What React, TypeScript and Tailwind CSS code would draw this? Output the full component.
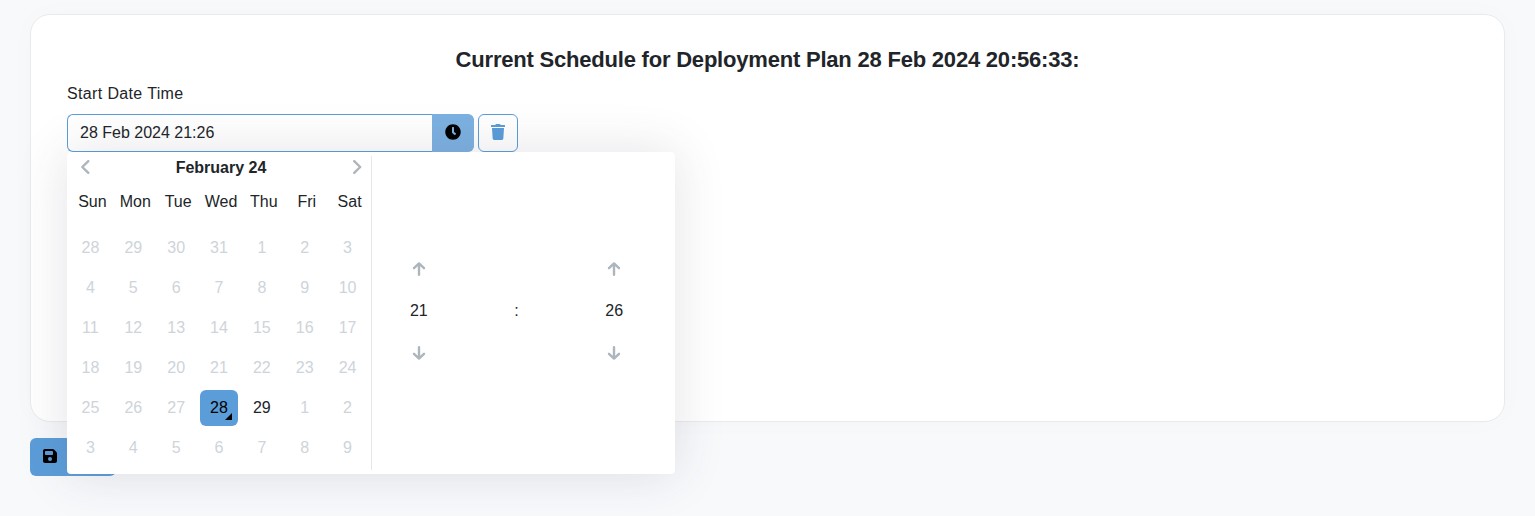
import { FaClock, FaTrash } from "react-icons/fa";
import { FaFloppyDisk } from "react-icons/fa6";

const weekdays = ["Sun", "Mon", "Tue", "Wed", "Thu", "Fri", "Sat"];

const days = [
  28, 29, 30, 31, 1, 2, 3,
  4, 5, 6, 7, 8, 9, 10,
  11, 12, 13, 14, 15, 16, 17,
  18, 19, 20, 21, 22, 23, 24,
  25, 26, 27, 28, 29, 1, 2,
  3, 4, 5, 6, 7, 8, 9,
];
const SELECTED = 31;
const ENABLED = 32;

function LineIcon({ d, className }: { d: string; className: string }) {
  return (
    <svg
      viewBox="0 0 16 16"
      className={className}
      fill="none"
      stroke="currentColor"
      strokeWidth="2.4"
      strokeLinecap="round"
      strokeLinejoin="round"
    >
      <path d={d} />
    </svg>
  );
}

function Day({ index, value }: { index: number; value: number }) {
  if (index === SELECTED) {
    return (
      <button className="relative h-9 w-full rounded-md bg-[#5b9dd9] text-black">
        {value}
        <span className="absolute right-1.5 bottom-1.5 border-b-[7px] border-l-[7px] border-b-black border-l-transparent" />
      </button>
    );
  }
  return (
    <button className={index === ENABLED ? "h-9 w-full text-[#212529]" : "h-9 w-full text-[#ced4da]"}>{value}</button>
  );
}

function Calendar() {
  return (
    <div className="w-[301px] border-r border-[#e5e7eb]">
      <div className="flex h-[23px] items-center justify-between px-1.5 text-[#adb5bd]">
        <LineIcon className="mb-px size-4" d="M11.3 2.2 L5.3 8 L11.3 13.8" />
        <span className="font-bold text-[#212529]">February 24</span>
        <LineIcon className="mb-px size-4" d="M5.2 2.2 L11.2 8 L5.2 13.8" />
      </div>
      <div className="grid h-[46px] grid-cols-7 items-center text-center">
        {weekdays.map((name) => (
          <span key={name}>{name}</span>
        ))}
      </div>
      <div className="mt-[3px] grid auto-rows-[40px] grid-cols-7">
        {days.map((value, index) => (
          <div key={index} className="flex items-center pr-1">
            <Day index={index} value={value} />
          </div>
        ))}
      </div>
    </div>
  );
}

function Stepper({ value }: { value: string }) {
  return (
    <div className="grid flex-1 grid-rows-[42px_42px_42px] place-items-center">
      <LineIcon className="size-4 text-[#adb5bd]" d="M8 13.8 V2.4 M3 7.2 L8 2.4 L13 7.2" />
      <span>{value}</span>
      <LineIcon className="size-4 text-[#adb5bd]" d="M8 2.2 V13.6 M3 8.8 L8 13.6 L13 8.8" />
    </div>
  );
}

function DateTimePicker() {
  return (
    <div className="absolute top-full left-0 z-10 flex h-[322px] w-[608px] rounded bg-white p-1 text-[#212529] shadow-[0_0_50px_rgba(72,60,85,0.15)]">
      <Calendar />
      <div className="-ml-0.5 flex w-[293px] items-center pb-1">
        <Stepper value="21" />
        <span className="flex-1 text-center">:</span>
        <Stepper value="26" />
      </div>
    </div>
  );
}

export default function App() {
  return (
    <main className="h-[516px] overflow-hidden bg-[#f7f9fb] px-[30px] pt-3.5 font-['Liberation_Sans',Arial,sans-serif] text-base leading-6 text-[#212529]">
      <section className="h-[408px] rounded-[20px] border border-[#e8eaed] bg-white px-9 pt-[30px] shadow-[0_0_30px_rgba(0,0,0,0.02)]">
        <h1 className="text-center text-[22px] leading-[30px] font-bold tracking-[-0.207px]">
          Current Schedule for Deployment Plan 28 Feb 2024 20:56:33:
        </h1>
        <div className="mt-[7px] leading-6 tracking-[0.36px]">Start Date Time</div>
        <div className="relative mt-2 flex h-[38px] w-[451px] gap-1">
          <div className="flex w-[407px]">
            <input
              className="w-[365px] rounded-l-md border border-r-0 border-[#5b9dd9] bg-white px-3 outline-none"
              defaultValue="28 Feb 2024 21:26"
            />
            <button className="flex flex-1 items-center justify-center rounded-r-md border border-l-0 border-[#7cb1e1] bg-[#7cb1e1] pb-0.5 text-black">
              <FaClock className="size-4" />
            </button>
          </div>
          <button className="flex w-10 items-center justify-center rounded-md border border-[#5b9dd9] pb-0.5 text-[#5b9dd9]">
            <FaTrash className="h-4 w-3.5" />
          </button>
          <DateTimePicker />
        </div>
      </section>
      <button className="mt-4 flex h-[38px] w-[86px] items-center rounded-md bg-[#5b9dd9] pb-0.5 pl-[13px] text-black">
        <FaFloppyDisk className="h-4 w-3.5" />
      </button>
    </main>
  );
}
